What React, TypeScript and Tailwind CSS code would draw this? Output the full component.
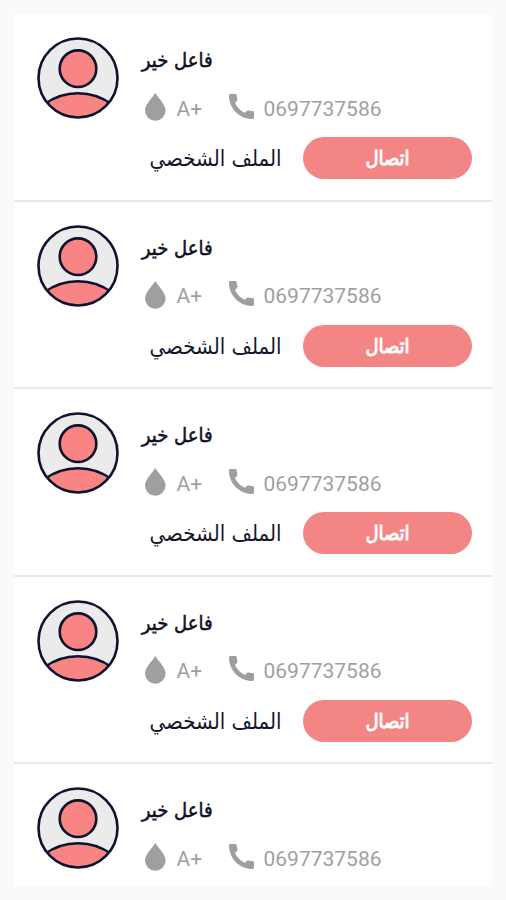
import React from 'react';

interface Donor {
  id: number;
  name: string;
  bloodType: string;
  phone: string;
}

const donors: Donor[] = [1, 2, 3, 4, 5].map((id) => ({
  id,
  name: 'فاعل خير',
  bloodType: 'A+',
  phone: '0697737586',
}));

function Avatar() {
  return (
    <svg viewBox="0 0 82 82" className="w-[82px] h-[82px] shrink-0" aria-hidden="true">
      <defs>
        <clipPath id="avatar-clip">
          <circle cx="41" cy="41" r="39.5" />
        </clipPath>
      </defs>
      <circle cx="41" cy="41" r="39.5" fill="#ebebeb" />
      <g clipPath="url(#avatar-clip)" fill="#f88584" stroke="#0e1330" strokeWidth="2.6">
        <circle cx="41" cy="31.7" r="18.3" />
        <path d="M7 67.5C27 52.5 55 52.5 75 67.5V90H7Z" />
      </g>
      <circle cx="41" cy="41" r="39.5" fill="none" stroke="#0e1330" strokeWidth="2.6" />
    </svg>
  );
}

function DropIcon() {
  return (
    <svg viewBox="0 0 21 28" className="w-[21px] h-[28px] shrink-0 fill-[#9f9f9f]" aria-hidden="true">
      <path d="M10.3 0C7 5.5 0 11.2 0 17.6A10.3 10.2 0 0 0 20.6 17.6C20.6 11.2 13.6 5.5 10.3 0Z" />
    </svg>
  );
}

function PhoneIcon() {
  return (
    <svg viewBox="0 0 25 25" className="-mt-[2px] w-[25px] h-[25px] shrink-0 fill-[#9f9f9f]" aria-hidden="true">
      <path d="M1.3 0H6.4Q7.6 0 7.7 1.3Q7.8 3.5 8.4 5.3Q8.6 6.2 8 6.9L6 8.9C7.8 12.8 11.5 16.9 16 18.7L18 16.8Q18.7 16.1 19.6 16.4Q21.5 17 23.7 17.1Q25 17.2 25 18.4V23.6Q25 25 23.6 25C10.6 25 0 14.3 0 1.4Q0 0 1.3 0Z" />
    </svg>
  );
}

function DonorRow({ donor, showActions }: { donor: Donor; showActions: boolean }) {
  return (
    <li className="flex h-[187.5px] shrink-0 items-start border-b-2 border-[#e8e8e8] pl-[22.5px] pr-5 pt-[23px] last:border-b-0">
      <Avatar />
      <div className="ml-[22px] flex-1">
        <h2 dir="rtl" className="w-[72px] h-[44px] pt-[8px] text-[20px] leading-[30px] text-[#10101f] whitespace-nowrap [-webkit-text-stroke:0.5px_#10101f]">
          {donor.name}
        </h2>
        <div className="flex h-[52px] items-center font-[Roboto,sans-serif] text-[21px] text-[#9f9f9f] [font-stretch:normal]">
          <div className="flex w-[88px] items-center pl-[4px]">
            <DropIcon />
            <span className="ml-[11px] pt-[5px]">{donor.bloodType}</span>
          </div>
          <PhoneIcon />
          <span className="ml-[10px] pt-[5px]">{donor.phone}</span>
        </div>
        {showActions && (
          <div className="mt-1 flex h-[42px] items-center justify-between">
            <button dir="rtl" className="w-[141px] pt-[2px] text-right text-[22px] leading-[30px] text-[#15152b] whitespace-nowrap">
              الملف الشخصي
            </button>
            <button dir="rtl" className="h-[42px] w-[169px] rounded-full bg-[#f38584] text-[20px] text-white [-webkit-text-stroke:0.9px_#fff]">
              اتصال
            </button>
          </div>
        )}
      </div>
    </li>
  );
}

export default function App() {
  return (
    <main className="h-[900px] overflow-hidden bg-[#fafafa] p-[14px] font-['DejaVu_Sans_Condensed','DejaVu_Sans',sans-serif] [font-stretch:condensed]">
      <ul className="flex h-[872px] flex-col overflow-hidden bg-white">
        {donors.map((donor, index) => (
          <DonorRow key={donor.id} donor={donor} showActions={index < donors.length - 1} />
        ))}
      </ul>
    </main>
  );
}
